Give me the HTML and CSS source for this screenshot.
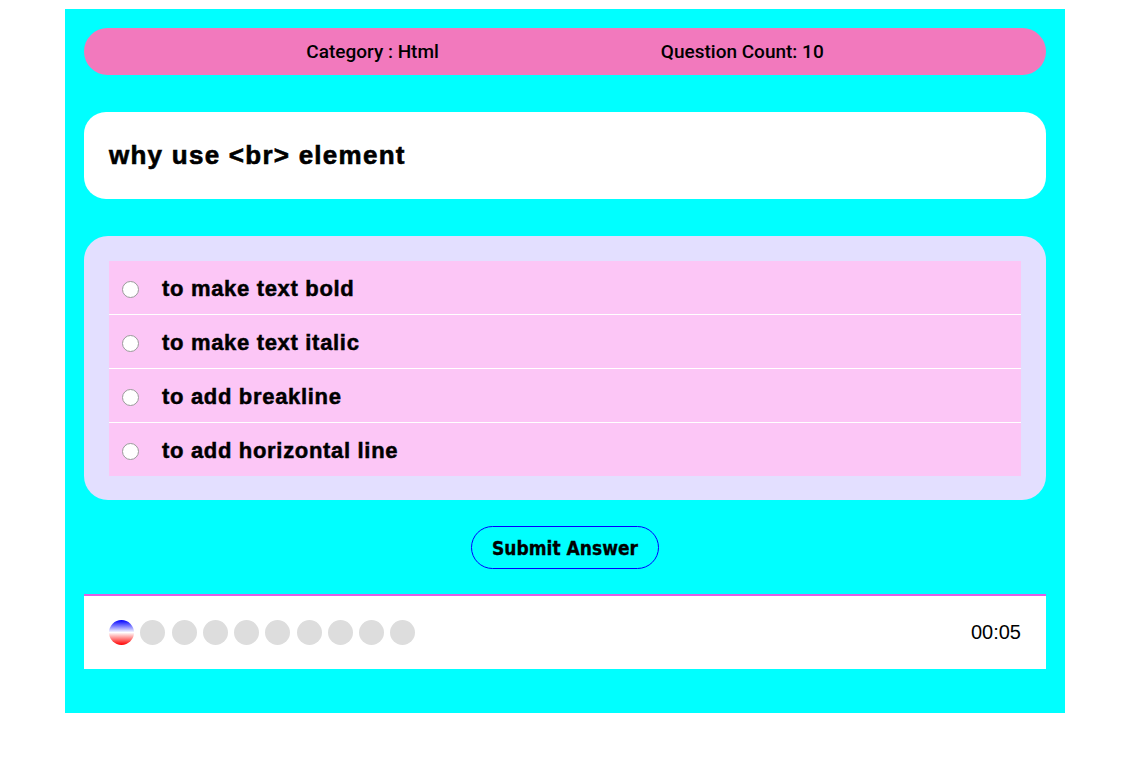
FILE: index.html
```html
<!DOCTYPE html>
<html lang="en">
<head>
<meta charset="utf-8">
<title>Quiz</title>
<link rel="stylesheet" href="styles.css">
</head>
<body>
<div class="quiz">
  <div class="quiz-header">
    <span class="meta">Category : Html</span>
    <span class="meta">Question Count: 10</span>
  </div>
  <div class="question-card">
    <h2 class="question">why use &lt;br&gt; element</h2>
  </div>
  <div class="options-card">
    <label class="option"><input type="radio" name="answer" class="radio"><span class="option-text">to make text bold</span></label>
    <label class="option"><input type="radio" name="answer" class="radio"><span class="option-text">to make text italic</span></label>
    <label class="option"><input type="radio" name="answer" class="radio"><span class="option-text">to add breakline</span></label>
    <label class="option"><input type="radio" name="answer" class="radio"><span class="option-text">to add horizontal line</span></label>
  </div>
  <div class="actions">
    <button class="submit" type="button">Submit Answer</button>
  </div>
  <div class="quiz-footer">
    <div class="progress">
      <span class="dot dot-current"></span>
      <span class="dot"></span>
      <span class="dot"></span>
      <span class="dot"></span>
      <span class="dot"></span>
      <span class="dot"></span>
      <span class="dot"></span>
      <span class="dot"></span>
      <span class="dot"></span>
      <span class="dot"></span>
    </div>
    <span class="timer">00:05</span>
  </div>
</div>
</body>
</html>
```
FILE: styles.css
```css
* {
  box-sizing: border-box;
}

html, body {
  margin: 0;
  padding: 0;
  background: #ffffff;
}

body {
  padding-top: 9px;
}

.quiz {
  width: 1000px;
  margin-left: 65px;
  background: #00ffff;
  padding: 19px 19px 44px;
  display: flex;
  flex-direction: column;
}

.quiz-header {
  height: 47px;
  border-radius: 24px;
  background: #f279bd;
  display: flex;
  align-items: center;
  justify-content: center;
  gap: 222px;
  margin-bottom: 37px;
}

.meta {
  font-family: Roboto, "Liberation Sans", sans-serif;
  font-weight: 500;
  font-size: 19px;
  letter-spacing: 0;
  color: #000;
}

.question-card {
  height: 87px;
  background: #ffffff;
  border-radius: 22px;
  padding: 0 25px;
  display: flex;
  align-items: center;
  margin-bottom: 37px;
}

.question {
  margin: 0;
  font-family: "Liberation Sans", Arial, sans-serif;
  font-weight: bold;
  font-size: 26px;
  letter-spacing: 1.25px;
  -webkit-text-stroke: 0.6px #000;
  color: #000;
}

.options-card {
  background: #e3dfff;
  border-radius: 24px;
  padding: 25px 25px 24px;
  display: flex;
  flex-direction: column;
}

.option {
  height: 54px;
  background: #fcc6f6;
  border-bottom: 1px solid #ffffff;
  display: flex;
  align-items: center;
  padding: 3px 0 0 13px;
  cursor: pointer;
}

.option:last-child {
  height: 53px;
  border-bottom: 0;
}

.radio {
  appearance: none;
  -webkit-appearance: none;
  width: 17px;
  height: 17px;
  margin: 0 23px 0 0;
  border: 1px solid #9a9a9a;
  border-radius: 50%;
  background: #ffffff;
  flex: none;
}

.option-text {
  font-family: "Liberation Sans", Arial, sans-serif;
  font-weight: bold;
  font-size: 22px;
  letter-spacing: 0.68px;
  -webkit-text-stroke: 0.5px #000;
  color: #000;
}

.actions {
  display: flex;
  justify-content: center;
  padding: 26px 0 25px;
}

.submit {
  height: 43px;
  width: 188px;
  padding: 0;
  border: 1px solid #0000ff;
  border-radius: 22px;
  background: transparent;
  font-family: "DejaVu Sans Condensed", "DejaVu Sans", sans-serif;
  font-stretch: condensed;
  font-weight: bold;
  font-size: 19px;
  -webkit-text-stroke: 0.3px #000;
  color: #000;
}

.quiz-footer {
  height: 75px;
  background: #ffffff;
  border-top: 2px solid #e45ce6;
  padding: 0 25px;
  display: flex;
  align-items: center;
  justify-content: space-between;
}

.progress {
  display: flex;
  gap: 6.25px;
}

.dot {
  width: 25px;
  height: 25px;
  border-radius: 50%;
  background: #dddddd;
}

.dot-current {
  background: linear-gradient(#0000ff, #ffffff 50%, #ff0000);
}

.timer {
  font-family: "Liberation Sans", Arial, sans-serif;
  font-size: 20px;
  color: #000;
}
```
